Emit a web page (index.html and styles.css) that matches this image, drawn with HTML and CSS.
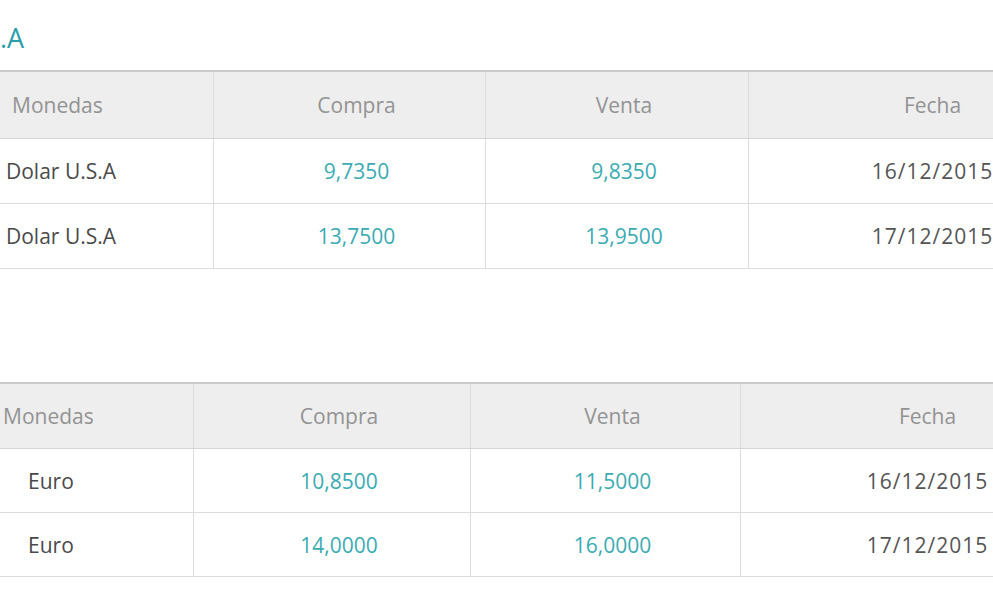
FILE: index.html
```html
<!DOCTYPE html>
<html lang="es">
<head>
<meta charset="utf-8">
<title>Cotizaciones</title>
<link rel="stylesheet" href="styles.css">
</head>
<body>
<div class="page">
  <h2 class="title">.A</h2>
  <table class="rates rates-usd">
    <colgroup>
      <col class="c1"><col class="c2"><col class="c3"><col class="c4">
    </colgroup>
    <thead>
      <tr><th class="name">Monedas</th><th>Compra</th><th>Venta</th><th>Fecha</th></tr>
    </thead>
    <tbody>
      <tr><td class="name">Dolar U.S.A</td><td class="num">9,7350</td><td class="num">9,8350</td><td class="date">16/12/2015</td></tr>
      <tr><td class="name">Dolar U.S.A</td><td class="num">13,7500</td><td class="num">13,9500</td><td class="date">17/12/2015</td></tr>
    </tbody>
  </table>

  <table class="rates rates-eur">
    <colgroup>
      <col class="c1"><col class="c2"><col class="c3"><col class="c4">
    </colgroup>
    <thead>
      <tr><th class="name">Monedas</th><th>Compra</th><th>Venta</th><th>Fecha</th></tr>
    </thead>
    <tbody>
      <tr><td class="name">Euro</td><td class="num">10,8500</td><td class="num">11,5000</td><td class="date">16/12/2015</td></tr>
      <tr><td class="name">Euro</td><td class="num">14,0000</td><td class="num">16,0000</td><td class="date">17/12/2015</td></tr>
    </tbody>
  </table>
</div>
</body>
</html>
```

FILE: styles.css
```css
html, body {
  margin: 0;
  padding: 0;
  background: #ffffff;
  overflow: hidden;
}

.page {
  width: 993px;
  height: 610px;
  overflow: hidden;
  font-family: "Open Sans", "Noto Sans", sans-serif;
}

.title {
  margin: 0;
  padding: 22px 0 0 0;
  height: 48px;
  box-sizing: border-box;
  font-weight: 400;
  font-size: 27px;
  line-height: 32px;
  color: #2a9ea8;
}

.rates {
  border-collapse: collapse;
  table-layout: fixed;
  font-size: 21px;
}

.rates th,
.rates td {
  padding: 0 0 0 15px;
  text-align: center;
  border-left: 1px solid #dcdcdc;
  border-right: 1px solid #dcdcdc;
  border-bottom: 1px solid #dcdcdc;
  white-space: nowrap;
}

.rates tr > :first-child {
  border-left: none;
}

.rates thead th {
  background: #eeeeee;
  color: #939393;
  font-weight: 400;
  height: 66px;
  border-top: 2px solid #c9c9c9;
  border-bottom: 1px solid #d4d4d4;
}

.rates tbody td {
  height: 64px;
  color: #4a4a4a;
}

.rates td.num {
  color: #3aabb3;
}

.rates td.date {
  color: #555555;
  letter-spacing: 1px;
}

.rates .name {
  text-align: left;
}

/* Dollar table */
.rates-usd {
  margin-top: 22px;
  width: 1102px;
}
.rates-usd .c1 { width: 213px; }
.rates-usd .c2 { width: 272px; }
.rates-usd .c3 { width: 263px; }
.rates-usd .c4 { width: 354px; }
.rates-usd th.name { padding-left: 12px; }
.rates-usd td.name { padding-left: 6px; }

/* Euro table */
.rates-eur {
  margin-top: 113px;
  width: 1100px;
}
.rates-eur thead th { height: 64px; }
.rates-eur tbody td { height: 63px; }
.rates-eur .c1 { width: 193px; }
.rates-eur .c2 { width: 277px; }
.rates-eur .c3 { width: 270px; }
.rates-eur .c4 { width: 360px; }
.rates-eur th.name { padding-left: 3px; }
.rates-eur td.name { padding-left: 28px; }
```
